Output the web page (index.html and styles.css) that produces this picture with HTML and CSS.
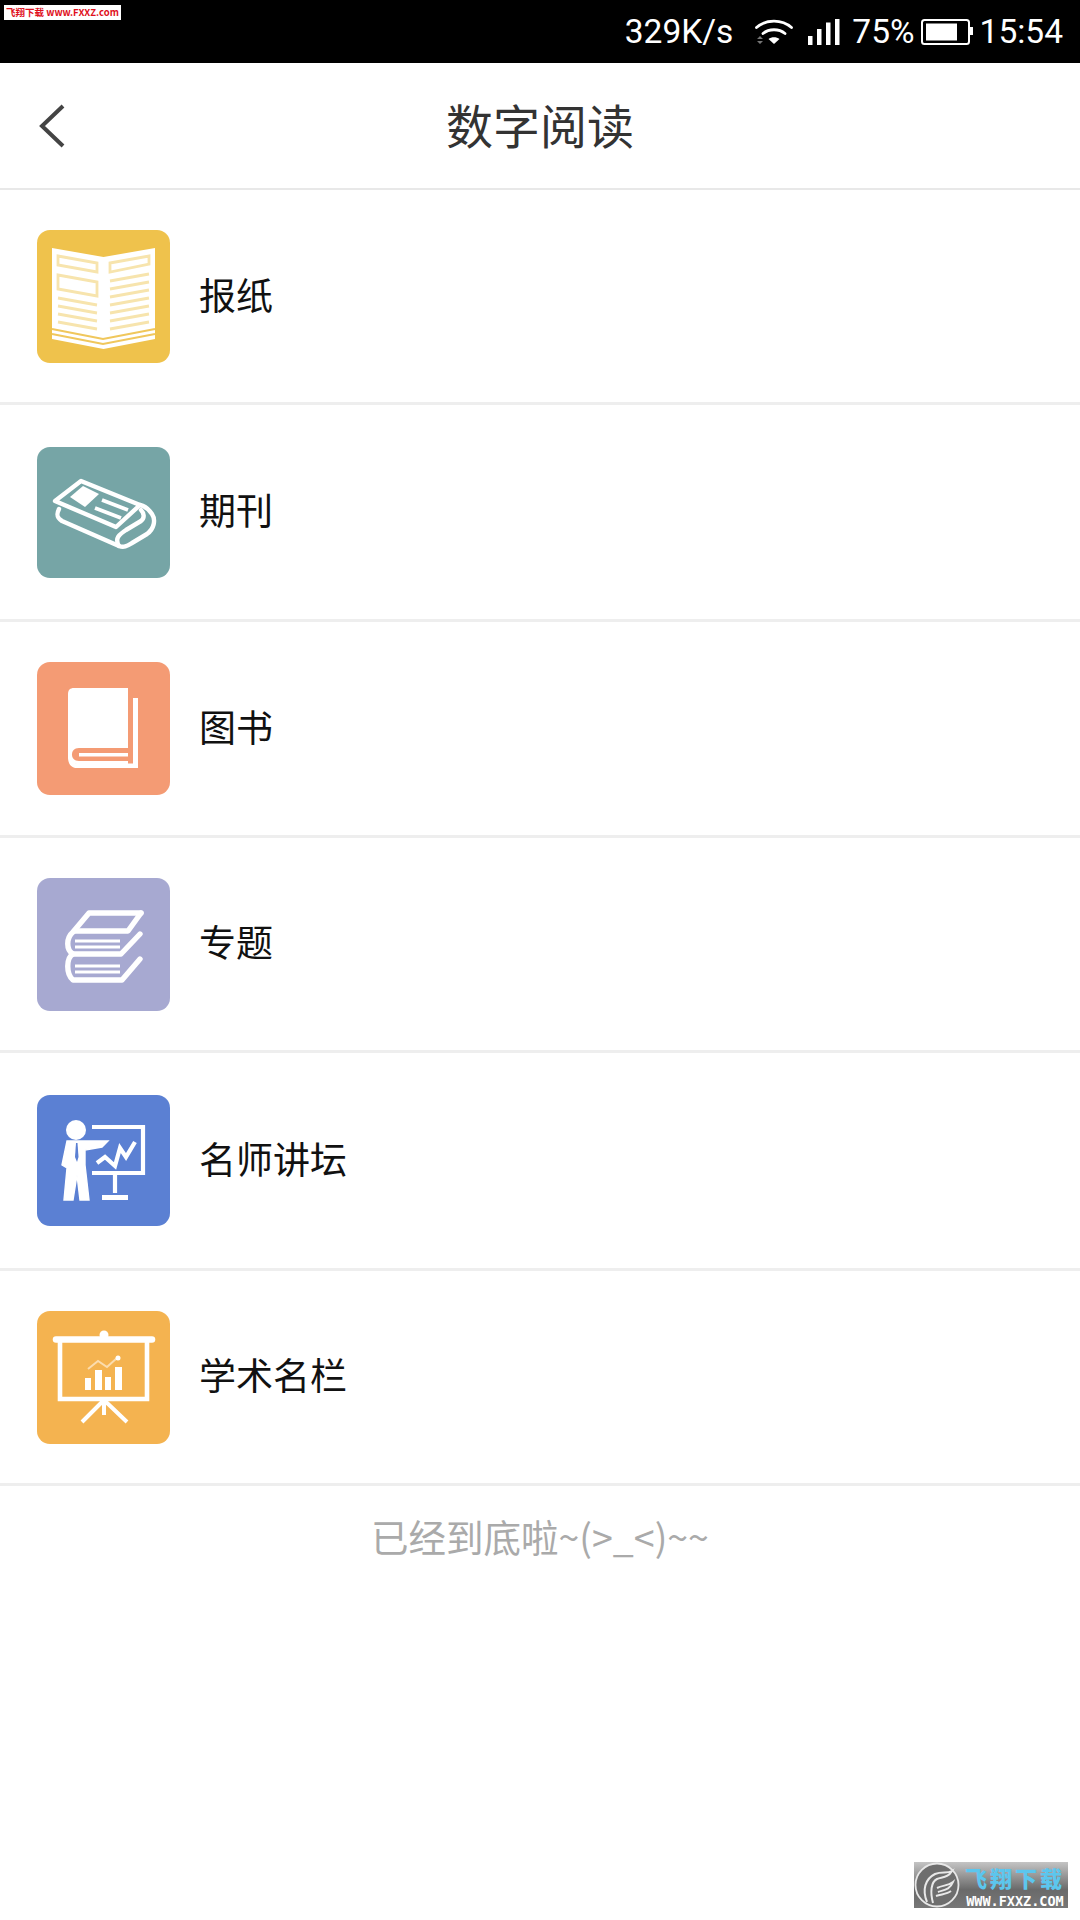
FILE: index.html
```html
<!DOCTYPE html>
<html lang="zh-CN">
<head>
<meta charset="utf-8">
<title>数字阅读</title>
<link rel="stylesheet" href="styles.css">
</head>
<body>
<div class="page">
  <div class="statusbar">
    <span class="st-speed">329K/s</span>
    <svg class="st-wifi" viewBox="0 0 38 27"><g fill="none" stroke="#fff" stroke-width="2.800" stroke-linecap="round"><path d="M1.500 9.500C11 1 27 1 36.500 9.500"/><path d="M8 15.500C14 10.500 24 10.500 30 15.500"/></g><path d="M13.500 21C16.500 18.500 21.500 18.500 24.500 21L19 26Z" fill="#fff"/><path d="M2 21h6l-3-3zM2 23h6l-3 3z" fill="#777"/></svg>
    <svg class="st-signal" viewBox="0 0 32 26"><path d="M0 17h4.500v9H0zM9 10h4.500v16H9zM18 3.500h4.500V26H18zM27 0h4.500v26H27z" fill="#fff"/></svg>
    <span class="st-batt-text">75%</span>
    <svg class="st-battery" viewBox="0 0 52 26"><rect x="1" y="1" width="47" height="24" rx="2.500" fill="none" stroke="#fff" stroke-width="2"/><rect x="5" y="4.500" width="31" height="17" fill="#fff"/><rect x="49" y="8" width="3" height="8" fill="#fff"/></svg>
    <span class="st-time">15:54</span>
    <div class="wm-top">飞翔下载 www.FXXZ.com</div>
  </div>

  <header class="topbar">
    <svg class="back" viewBox="0 0 26 44"><path d="M24 2L3 22L24 42" fill="none" stroke="#444" stroke-width="4"/></svg>
    <h1 class="title">数字阅读</h1>
  </header>

  <ul class="list">
    <li class="row row-214">
      <div class="ico ico-yellow">
        <svg viewBox="0 0 133 133">
          <path d="M15 18L66.500 27L118 18V109L66.500 119L15 109Z" fill="#fff"/>
          <g fill="none" stroke="#f7e4ad" stroke-width="2.800">
            <path d="M21 26L60 33V42L21 35Z"/>
            <path d="M73 33L112 26V34L73 42Z"/>
            <path d="M21 45L60 52V66L21 59Z"/>
            <path d="M21 68L60 75M21 76L60 83M21 84L60 91M21 92L60 99"/>
            <path d="M73 51L112 44M73 59L112 52M73 67L112 60M73 75L112 68M73 83L112 76M73 91L112 84M73 99L112 92"/>
          </g>
          <path d="M15 99L66 109L118 99M15 104L66 114L118 104" fill="none" stroke="#f0c75c" stroke-width="2.200"/>
        </svg>
      </div>
      <span class="label">报纸</span>
    </li>
    <li class="row row-217">
      <div class="ico ico-short ico-teal">
        <svg viewBox="0 0 133 131">
          <g fill="none" stroke="#fff" stroke-width="4.400" stroke-linejoin="round" stroke-linecap="round">
            <path d="M18 54L44 34L103 58L79 80Z"/>
            <path d="M22 62C19 68 20 71 25 74L82 99C87 101 90 99 95 96L110 87C117 82 119 73 115 67C111 61 107 59 103 58"/>
            <path d="M82 99C77 91 83 87 89 83L104 74C108 71 107 66 104 63"/>
          </g>
          <path d="M33 50L46 39L62 47L48 60Z" fill="#fff"/>
          <path d="M65 53L91 63M58 61L84 71" stroke="#fff" stroke-width="3.800" fill="none"/>
        </svg>
      </div>
      <span class="label">期刊</span>
    </li>
    <li class="row row-216">
      <div class="ico ico-orange">
        <svg viewBox="0 0 133 133">
          <path d="M37 26H91V102H40C34 102 31 98 31 94V32C31 28 33 26 37 26Z" fill="#fff"/>
          <path d="M91 86H42C37 86 35 89 35 92.500C35 96 37 99 42 99H91" fill="#f49b74"/>
          <path d="M42 91H91V94.500H42Z" fill="#fff"/>
          <path d="M96 36H101V106H40C35 106 31 103 31 95V90C33 99 36 101.500 41 101.500H96Z" fill="#fff"/>
        </svg>
      </div>
      <span class="label">图书</span>
    </li>
    <li class="row row-215">
      <div class="ico ico-purple">
        <svg viewBox="0 0 133 133">
          <g fill="none" stroke="#fff" stroke-width="5.400" stroke-linecap="round" stroke-linejoin="round">
            <path d="M104 35H52L36 54C29 60 29 72 36 76C29 80 29 96 36 102H85L103 81"/>
            <path d="M104 35L91 53H38"/>
            <path d="M36 76H84L103 56"/>
          </g>
          <path d="M38 63H83M38 69H83M38 88H83M38 94H83" stroke="#fff" stroke-width="3" fill="none"/>
        </svg>
      </div>
      <span class="label">专题</span>
    </li>
    <li class="row row-218">
      <div class="ico ico-short ico-blue">
        <svg viewBox="0 0 133 131">
          <circle cx="39" cy="35" r="10" fill="#fff"/>
          <path d="M55 32H106V78H55" fill="none" stroke="#fff" stroke-width="4.200"/>
          <path d="M30 46H71L65 52L48 55V70L52 105H43L40 80L36 105H27L30 73L25 70Z" fill="#fff" stroke="#fff" stroke-width="1.400"/>
          <path d="M39 48L38 62L40 67L41.500 62L40.500 48Z" fill="#5b80d3"/>
          <path d="M60 68L68 62L78 71L83 53L89 62L98 47" fill="none" stroke="#fff" stroke-width="4.200"/>
          <path d="M78 78V98" stroke="#fff" stroke-width="4.200"/>
          <path d="M65 100H91V105H65Z" fill="#fff"/>
        </svg>
      </div>
      <span class="label">名师讲坛</span>
    </li>
    <li class="row row-215">
      <div class="ico ico-amber">
        <svg viewBox="0 0 133 133">
          <circle cx="67" cy="24" r="4.500" fill="#fff"/>
          <path d="M19 28.500H115" stroke="#fff" stroke-width="6.500" stroke-linecap="round"/>
          <path d="M23 30V88H110V30" fill="none" stroke="#fff" stroke-width="4.600"/>
          <path d="M66 90L45 111M68 90L90 111M67 90V104" fill="none" stroke="#fff" stroke-width="4"/>
          <path d="M48 67h6v12h-6zM58 59h7v20h-7zM68 66h6v13h-6zM78 56h7v23h-7z" fill="#fff"/>
          <path d="M51 58L61 50L70 56L80 47" fill="none" stroke="#fbdcae" stroke-width="2"/>
          <circle cx="81" cy="47" r="2.500" fill="#fff"/>
        </svg>
      </div>
      <span class="label">学术名栏</span>
    </li>
  </ul>

  <p class="end">已经到底啦~(&gt;_&lt;)~~</p>

  <div class="wm-bottom">
    <svg class="wm-logo" viewBox="0 0 46 46"><circle cx="23" cy="23" r="21.500" fill="#6e6e6e" stroke="#e8e8e8" stroke-width="1.800"/><path d="M13 40C8 28 11 17 21 12C28 9 33 12 38 9C34 16 28 15 23 17C17 20 16 30 19 41M23 26C29 23 34 24 39 20C36 28 29 28 24 30M22 34C28 32 33 32 37 29" fill="none" stroke="#e8e8e8" stroke-width="2"/></svg>
    <div class="wm-text">
      <span class="wm-cn">飞翔下载</span>
      <span class="wm-en">WWW.FXXZ.COM</span>
    </div>
  </div>
</div>
</body>
</html>
```

FILE: styles.css
```css
* { box-sizing: border-box; margin: 0; padding: 0; }
html, body { width: 1080px; height: 1920px; overflow: hidden; background: #fff; }
body { font-family: "Noto Sans CJK SC", "Noto Sans", sans-serif; }
.page { position: relative; width: 1080px; height: 1920px; background: #fff; }

.statusbar {
  position: relative;
  height: 63px;
  background: #000;
  color: #fff;
  display: flex;
  align-items: center;
  justify-content: flex-end;
  padding-right: 17px;
  font-family: Roboto, "Liberation Sans", sans-serif;
  font-size: 33.500px;
  line-height: 63px;
}
.st-speed { margin-right: 22px; }
.st-wifi { width: 38px; height: 27px; margin-right: 15px; }
.st-signal { width: 32px; height: 26px; margin-right: 12px; }
.st-batt-text { margin-right: 6px; }
.st-battery { width: 52px; height: 26px; margin-right: 7px; }
.wm-top {
  position: absolute;
  left: 4px;
  top: 5px;
  width: 117px;
  height: 15px;
  background: #fff;
  color: #e0101c;
  font-family: "Noto Sans CJK SC", sans-serif;
  font-size: 9.500px;
  font-weight: 700;
  line-height: 15px;
  text-align: center;
  white-space: nowrap;
}

.topbar {
  position: relative;
  height: 127px;
  display: flex;
  align-items: center;
  justify-content: center;
  border-bottom: 2px solid #e8e8e8;
}
.back { position: absolute; left: 39px; top: 41px; width: 26px; height: 44px; }
.title { font-size: 47px; font-weight: 400; color: #333; line-height: 1; padding-bottom: 4px; }

.list { list-style: none; padding-top: 1px; }
.row {
  display: flex;
  align-items: center;
  gap: 29px;
  padding-left: 37px;
  border-bottom: 3px solid #eee;
}
.row-214 { height: 214px; }
.row-215 { height: 215px; }
.row-216 { height: 216px; }
.row-217 { height: 217px; }
.row-218 { height: 218px; }

.ico { width: 133px; height: 133px; border-radius: 13px; flex: none; display: flex; }
.ico-short { height: 131px; }
.ico svg { width: 100%; height: 100%; }
.ico-yellow { background: #efc24c; }
.ico-teal { background: #76a5a6; }
.ico-orange { background: #f49b74; }
.ico-purple { background: #a7a9d1; }
.ico-blue { background: #5b80d3; }
.ico-amber { background: #f4b350; }
.label { font-size: 37px; color: #111; line-height: 1; padding-bottom: 5px; }

.end {
  width: fit-content;
  margin: 0 auto;
  padding-top: 28px;
  font-size: 37.500px;
  line-height: 44px;
  color: #aaa;
}

.wm-bottom {
  position: absolute;
  left: 914px;
  top: 1862px;
  width: 154px;
  height: 46px;
  display: flex;
  gap: 2px;
  background: linear-gradient(#c4c4c4, #6a6a6a 60%, #777);
}
.wm-logo { width: 46px; height: 46px; flex: none; }
.wm-text { display: flex; flex-direction: column; align-items: center; flex: 1; }
.wm-cn {
  font-size: 22px;
  font-weight: 900;
  line-height: 30px;
  letter-spacing: 3px;
  color: #5cc6ee;
}
.wm-en {
  font-family: "DejaVu Sans Mono", monospace;
  font-size: 13.500px;
  font-weight: 700;
  line-height: 14px;
  margin-top: 2px;
  color: #fff;
  white-space: nowrap;
}
```
